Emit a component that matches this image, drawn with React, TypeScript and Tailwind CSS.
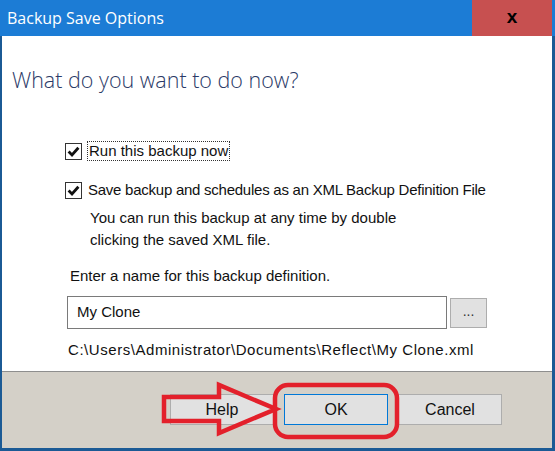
import React from "react";

function CheckBox() {
  return (
    <span className="flex h-[17px] w-[17px] shrink-0 items-center justify-center border border-[#333333] bg-white">
      <svg width="13" height="13" viewBox="0 0 13 13">
        <path d="M1.6 6.6 L5 10 L11.4 2.8" fill="none" stroke="#111" strokeWidth="2.8" />
      </svg>
    </span>
  );
}

function Button({ label, primary }: { label: string; primary?: boolean }) {
  return (
    <div
      className={
        "flex h-[31px] w-[104px] items-center justify-center bg-[#e1e1e1] text-[16px] text-[#111] " +
        (primary ? "border border-[#0078d7]" : "border border-[#adadad]")
      }
    >
      {label}
    </div>
  );
}

export default function App() {
  return (
    <div
      className="relative flex h-[451px] w-[555px] flex-col bg-[#1b5a95] pb-[3px] pl-[2px] pr-[3px]"
      style={{ fontFamily: "'Liberation Sans', Arial, sans-serif" }}
    >
      {/* Title bar */}
      <div className="-ml-[2px] -mr-[3px] flex h-9 items-stretch justify-between bg-[#1c7cd5]">
        <div
          className="flex items-center pl-[7px] text-[16px] text-white"
          style={{ fontFamily: "'Open Sans', sans-serif" }}
        >
          Backup Save Options
        </div>
        <div className="mr-[3px] flex w-[80px] items-center justify-center bg-[#c75050] pb-[2px] text-[19px] font-bold text-black">
          x
        </div>
      </div>

      {/* Body */}
      <div className="flex flex-1 flex-col bg-white">
        <div
          className="mt-[29px] pl-[10px] text-[21.5px] font-light leading-[30px] text-[#2b3a67]"
          style={{ fontFamily: "'Open Sans', sans-serif" }}
        >
          What do you want to do now?
        </div>

        <div className="mt-[46px] flex items-center gap-[5px] pl-[63px] text-[15px] text-[#111]">
          <CheckBox />
          <span className="border border-dotted border-[#333] px-[1px] leading-[18px]">Run this backup now</span>
        </div>

        <div className="mt-[20px] flex items-center gap-[6px] pl-[63px] text-[15px] text-[#111]">
          <CheckBox />
          <span className="leading-[18px] tracking-[-0.25px]">
            Save backup and schedules as an XML Backup Definition File
          </span>
        </div>

        <div className="mt-[8px] pl-[88px] text-[15px] leading-[22px] text-[#111]">
          You can run this backup at any time by double
          <br />
          clicking the saved XML file.
        </div>

        <div className="mt-[14px] pl-[68px] text-[15px] leading-[22px] text-[#111]">
          Enter a name for this backup definition.
        </div>

        <div className="mt-[9px] flex items-center gap-[3px] pl-[65px]">
          <div className="flex h-[33px] w-[380px] items-center border border-[#7a7a7a] bg-white pl-[9px] text-[15px] text-[#111]">
            My Clone
          </div>
          <div className="flex h-[30px] w-[37px] items-center justify-center border border-[#adadad] bg-[#e1e1e1] pb-[2px] text-[14px] text-[#333]">
            ...
          </div>
        </div>

        <div className="mt-[10px] pl-[66px] text-[15px] leading-[22px] tracking-[0.55px] text-[#111]">
          C:\Users\Administrator\Documents\Reflect\My Clone.xml
        </div>
      </div>

      {/* Footer */}
      <div className="flex h-[77px] items-start justify-end gap-[10px] border-t border-[#8e8e8e] bg-[#d4d0c8] pr-[50px] pt-[22px]">
        <Button label="Help" />
        <Button label="OK" primary />
        <Button label="Cancel" />
      </div>

      {/* Red annotation */}
      <svg className="pointer-events-none absolute left-0 top-0" width="555" height="451">
        <path
          d="M164 397 L219 397 L219 385 L276 409 L219 433 L219 421 L164 421 Z"
          fill="none"
          stroke="#e3202b"
          strokeWidth="4.5"
          strokeLinejoin="miter"
        />
        <rect x="275" y="385" width="122" height="52" rx="13" fill="none" stroke="#e3202b" strokeWidth="4.5" />
      </svg>
    </div>
  );
}
